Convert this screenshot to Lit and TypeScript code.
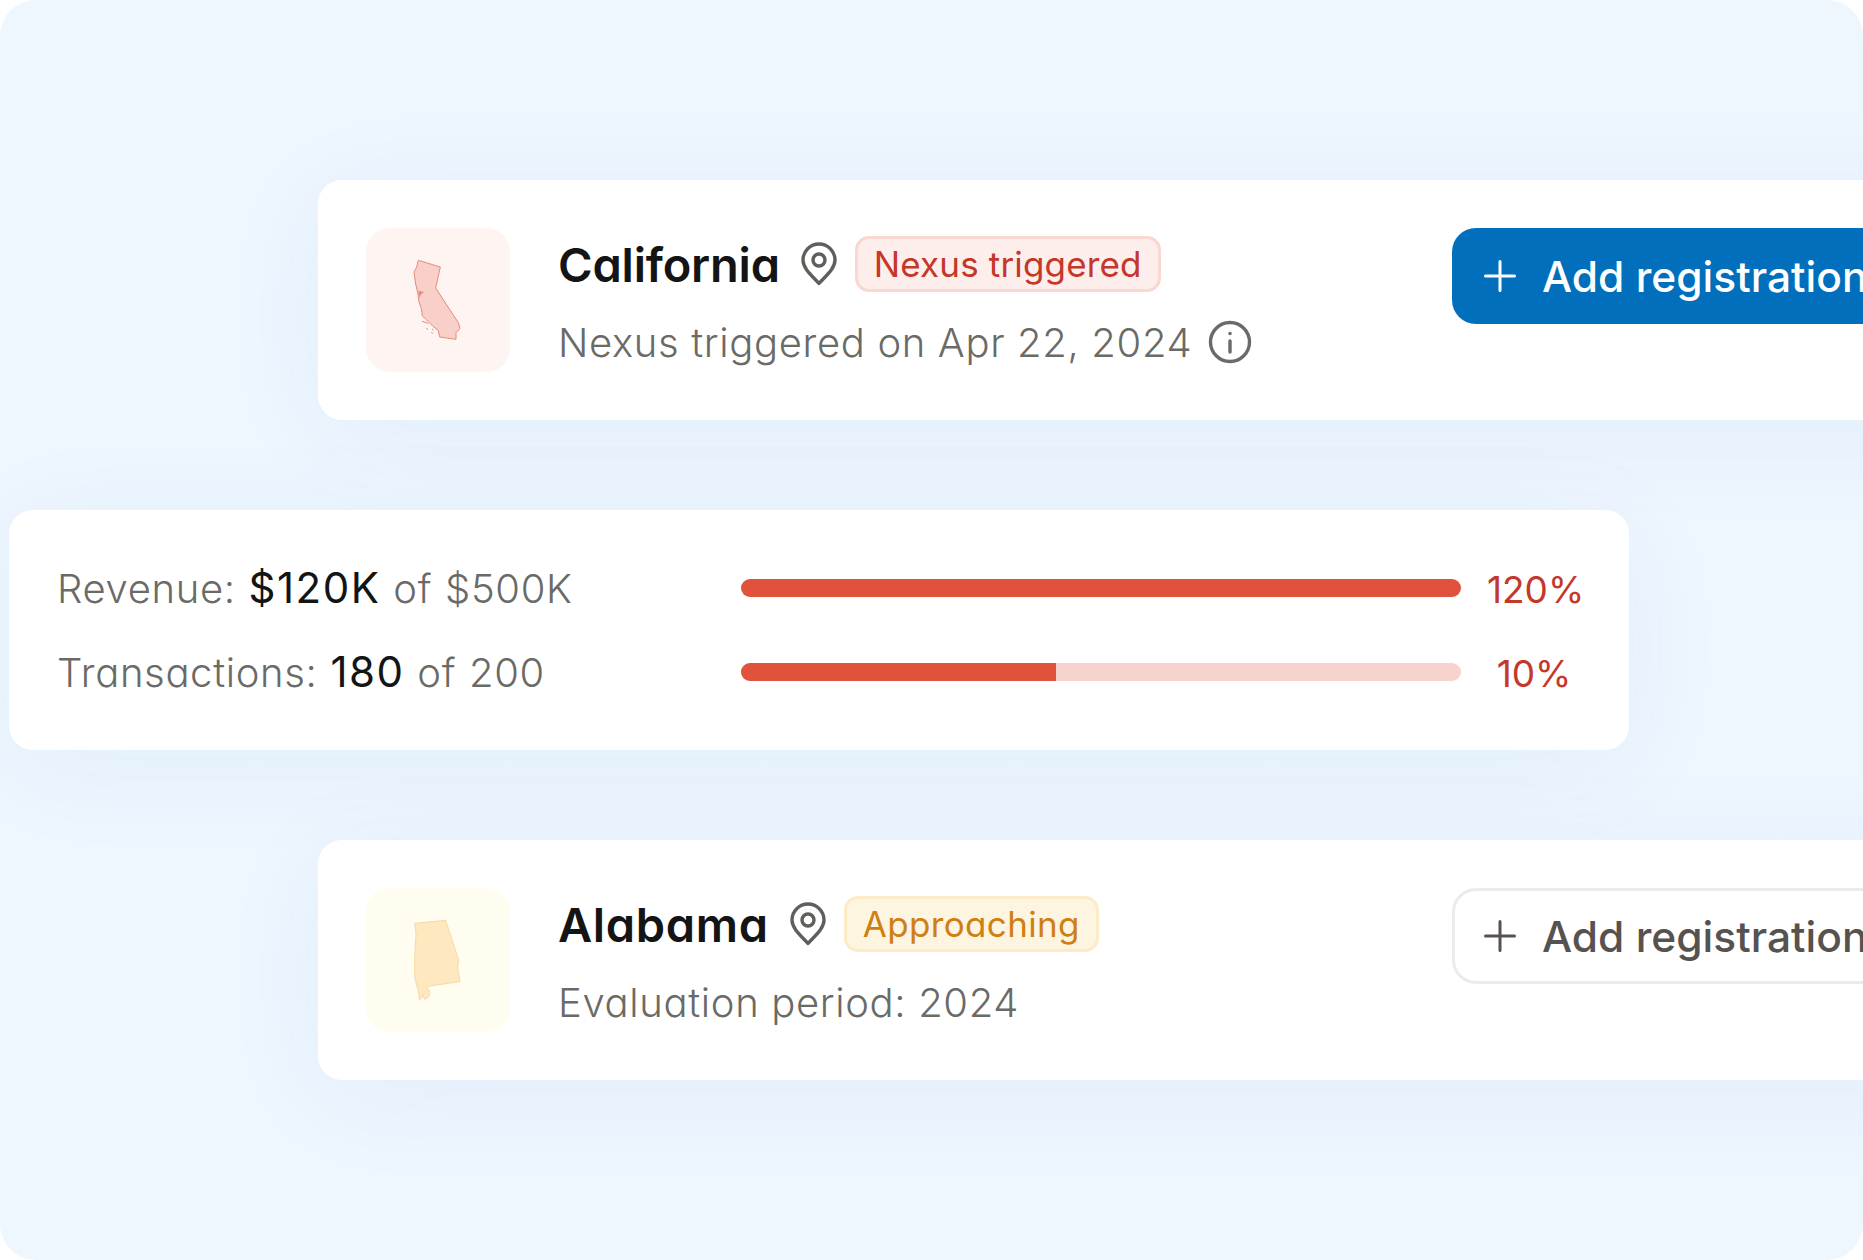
import { LitElement, html, css, svg } from 'lit';
import { customElement } from 'lit/decorators.js';

const pin = html`<svg class="pin" viewBox="0 0 36 44" fill="none" stroke="currentColor" stroke-width="3.4" stroke-linejoin="round">
  <path d="M18 41.5C12 34.5 2 27 2 18a16 16 0 0 1 32 0c0 9-10 16.5-16 23.5Z"></path>
  <circle cx="18" cy="18" r="6"></circle>
</svg>`;

const infoIcon = html`<svg class="info" viewBox="0 0 44 44" fill="none" stroke="currentColor" stroke-width="3.4" stroke-linecap="round">
  <circle cx="22" cy="22" r="19.5"></circle>
  <path d="M22 21v11"></path>
  <circle cx="22" cy="13.5" r="1" fill="currentColor" stroke-width="1.6"></circle>
</svg>`;

const plus = html`<svg class="plus" viewBox="0 0 32 32" fill="none" stroke="currentColor" stroke-width="3" stroke-linecap="round">
  <path d="M16 1.5v29M1.5 16h29"></path>
</svg>`;

// traced from the reference, in the reference's own crop coordinates
const californiaShape = svg`
  <path d="M237 181L303 201L289 264L357 368L362 386L350 398L350 418L301 411L297 392L280 378L262 360L249 348L246 326L238 302L236 282L229 252L224 216L232 201Z" fill="#f9d0c9" stroke="#e88a78" stroke-width="3" stroke-linejoin="round"></path>
  <path d="M237 272L254 276L244 284L241 294L238 282Z" fill="#e88a78"></path>
  <path d="M249 364L266 370M262 386L265 388M279 387L282 390M277 397L280 400" stroke="#e88a78" stroke-width="3" stroke-linecap="round"></path>`;

const alabamaShape = svg`
  <path d="M226 190L319 181L358 300L355 322L362 365L271 378L264 385C272 390 276 408 262 415L256 418L250 404L246 416L240 418L238 396L232 376L226 350L226 290L230 222Z" fill="#fde8bf" stroke="#f7d49c" stroke-width="2.5" stroke-linejoin="round"></path>`;

@customElement('state-card')
export class StateCard extends LitElement {
  static properties = {
    name: {},
    badge: {},
    detail: {},
    tone: {},
    primary: { type: Boolean },
    showInfo: { type: Boolean },
  };

  name = '';
  badge = '';
  detail = '';
  tone = 'red';
  primary = false;
  showInfo = false;

  static styles = css`
    :host {
      display: block;
      margin-left: 318px;
      width: 1700px;
      height: 240px;
      box-sizing: border-box;
      padding: 48px;
      background: #fff;
      border-radius: 24px;
      box-shadow: 0 16px 110px rgba(0, 125, 200, 0.06);
      font-family: Inter, sans-serif;
      font-feature-settings: 'cv11';
    }

    .row {
      display: flex;
    }

    .thumb {
      flex: none;
      width: 144px;
      height: 144px;
      border-radius: 24px;
      margin-right: 48px;
    }

    .thumb svg {
      display: block;
      width: 144px;
      height: 144px;
    }

    .red .thumb {
      background: #fef5f3;
    }

    .amber .thumb {
      background: #fffcf0;
    }

    .info-col {
      flex: none;
      width: 894px;
      padding-top: 8px;
    }

    .title {
      display: flex;
      align-items: center;
      height: 56px;
      color: #5f5f5c;
    }

    .title h2 {
      margin: 0 21px 0 0;
      padding-top: 2px;
      font-size: 47px;
      line-height: 56px;
      font-weight: 620;
      letter-spacing: -0.2px;
      color: #141414;
    }

    .amber .title h2 {
      letter-spacing: 0.65px;
    }

    .pin {
      flex: none;
      width: 36px;
      height: 44px;
      margin-right: 18px;
    }

    .badge {
      height: 56px;
      box-sizing: border-box;
      padding: 0 16px;
      border: 3px solid;
      border-radius: 14px;
      font-size: 35px;
      line-height: 51px;
      letter-spacing: 0.35px;
      font-weight: 400;
    }

    .red .badge {
      background: #fdeeeb;
      border-color: #f8d8d1;
      color: #c4372a;
      letter-spacing: 0.15px;
    }

    .amber .badge {
      background: #fef5e1;
      border-color: #fdebc8;
      color: #d07f12;
    }

    .detail {
      display: flex;
      align-items: center;
      height: 44px;
      margin-top: 28px;
      font-size: 40px;
      line-height: 44px;
      letter-spacing: 0.65px;
      font-weight: 300;
      color: #6a6a67;
    }

    .detail span {
      padding-top: 2px;
    }

    .info {
      flex: none;
      width: 44px;
      height: 44px;
      margin-left: 16px;
    }

    .add {
      flex: none;
      display: flex;
      align-items: center;
      box-sizing: border-box;
      width: 460px;
      height: 96px;
      padding-left: 32px;
      border-radius: 24px;
      font-size: 42.5px;
      font-weight: 450;
      font-feature-settings: normal;
      white-space: nowrap;
    }

    .add.solid {
      background: #016fbb;
      color: #fff;
    }

    .add.outline {
      border: 3px solid #ebebea;
      padding-left: 29px;
      color: #565250;
    }

    .plus {
      flex: none;
      width: 32px;
      height: 32px;
      margin-right: 26px;
    }
  `;

  render() {
    return html`
      <div class="row ${this.tone}">
        <div class="thumb">
          <svg viewBox="80 84 432 432">
            ${this.tone === 'red' ? californiaShape : alabamaShape}
          </svg>
        </div>
        <div class="info-col">
          <div class="title">
            <h2>${this.name}</h2>
            ${pin}
            <span class="badge">${this.badge}</span>
          </div>
          <div class="detail">
            <span>${this.detail}</span>${this.showInfo ? infoIcon : ''}
          </div>
        </div>
        <div class="add ${this.primary ? 'solid' : 'outline'}">
          ${plus}Add registration
        </div>
      </div>
    `;
  }
}

@customElement('app-root')
export class AppRoot extends LitElement {
  static styles = css`
    :host {
      display: block;
    }

    .page {
      width: 1863px;
      height: 1260px;
      box-sizing: border-box;
      padding-top: 180px;
      overflow: hidden;
      border-radius: 36px;
      background: #eef6fe;
      display: flex;
      flex-direction: column;
      gap: 90px;
      font-family: Inter, sans-serif;
      font-feature-settings: 'cv11';
    }

    .limits {
      margin-left: 9px;
      width: 1620px;
      height: 240px;
      box-sizing: border-box;
      padding: 48px;
      background: #fff;
      border-radius: 24px;
      box-shadow: 0 16px 110px rgba(0, 125, 200, 0.06);
      display: flex;
      flex-direction: column;
      gap: 24px;
    }

    .limit {
      display: grid;
      grid-template-columns: 684px 720px 1fr;
      align-items: center;
      height: 60px;
    }

    .label {
      margin-top: -2px;
      font-size: 40px;
      font-weight: 300;
      letter-spacing: 0.65px;
      word-spacing: 1px;
      white-space: nowrap;
      color: #6a6a67;
    }

    .label b {
      font-size: 42px;
      letter-spacing: 1.5px;
      font-weight: 400;
      color: #141414;
    }

    .track {
      height: 18px;
      border-radius: 9px;
      background: #f6d4cd;
      overflow: hidden;
    }

    .fill {
      height: 100%;
      background: #e0523c;
    }

    .pct {
      padding: 2px 0 0 26px;
      text-align: center;
      font-size: 37px;
      color: #c4372a;
    }
  `;

  limits = [
    { label: 'Revenue:', value: '$120K', of: 'of $500K', fill: 100, pct: '120%' },
    { label: 'Transactions:', value: '180', of: 'of 200', fill: 43.75, pct: '10%' },
  ];

  render() {
    return html`
      <div class="page">
        <state-card
          name="California"
          badge="Nexus triggered"
          detail="Nexus triggered on Apr 22, 2024"
          tone="red"
          primary
          showInfo
        ></state-card>
        <div class="limits">
          ${this.limits.map(
            (l) => html`
              <div class="limit">
                <div class="label">${l.label} <b>${l.value}</b> ${l.of}</div>
                <div class="track">
                  <div class="fill" style="width: ${l.fill}%"></div>
                </div>
                <div class="pct">${l.pct}</div>
              </div>
            `,
          )}
        </div>
        <state-card
          name="Alabama"
          badge="Approaching"
          detail="Evaluation period: 2024"
          tone="amber"
        ></state-card>
      </div>
    `;
  }
}
